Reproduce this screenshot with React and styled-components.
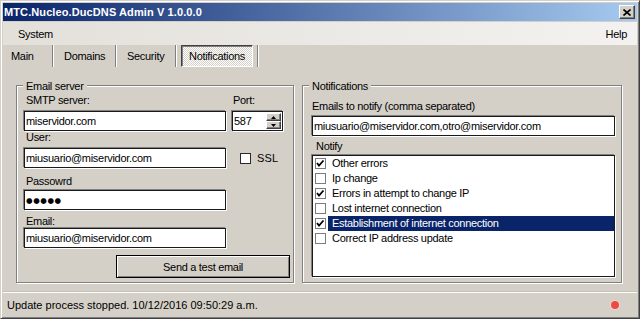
import React from 'react';
import styled, { createGlobalStyle } from 'styled-components';

const GlobalStyle = createGlobalStyle`
  html, body {
    margin: 0;
    padding: 0;
    background: #d4d0c8;
  }
  body {
    font-family: "Liberation Sans", Arial, sans-serif;
    font-size: 11px;
    color: #000;
  }
  * {
    box-sizing: border-box;
  }
`;

const Window = styled.div`
  width: 640px;
  height: 319px;
  display: flex;
  flex-direction: column;
  background: #d4d0c8;
  border: 1px solid;
  border-color: #d4d0c8 #404040 #404040 #d4d0c8;
  box-shadow: inset 1px 1px 0 #fff, inset -1px -1px 0 #808080;
  padding: 2px;
  letter-spacing: -0.3px;
`;

const TitleBar = styled.div`
  flex: none;
  height: 18px;
  display: flex;
  align-items: center;
  justify-content: space-between;
  padding: 0 2px 0 1px;
  background: linear-gradient(to right, #0a246a, #a6caf0);
`;

const Title = styled.span`
  color: #fff;
  font-weight: bold;
  letter-spacing: 0.1px;
`;

const CloseButton = styled.div`
  width: 16px;
  height: 14px;
  display: flex;
  align-items: center;
  justify-content: center;
  background: #d4d0c8;
  border: 1px solid;
  border-color: #fff #404040 #404040 #fff;
  box-shadow: inset -1px -1px 0 #808080;
`;

const MenuBar = styled.div`
  flex: none;
  margin-top: 1px;
  height: 23px;
  display: flex;
  align-items: center;
  justify-content: space-between;
  padding: 0 4px 0 9px;
  background: linear-gradient(to right, #e3e0da, #f3f2f0);
`;

const MenuItem = styled.span`
  padding: 0 6px;
`;

const Toolbar = styled.div`
  flex: none;
  height: 22px;
  display: flex;
  align-items: stretch;
`;

const ToolButton = styled.div`
  width: ${p => p.$w}px;
  display: flex;
  align-items: center;
  justify-content: flex-start;
  padding-left: 8px;
  ${p => p.$pressed && `
    justify-content: center;
    padding-left: 0;
    margin: 0 2px;
    border: 1px solid;
    border-color: #404040 #fff #fff #404040;
    box-shadow: inset 1px 1px 0 #808080;
    background: repeating-conic-gradient(#fff 0 25%, #d4d0c8 0 50%) 0 0 / 2px 2px;
  `}
`;

const ToolSep = styled.div`
  width: 2px;
  margin: 0 2px;
  border-left: 1px solid #808080;
  border-right: 1px solid #fff;
`;

const Content = styled.div`
  flex: 1;
  display: flex;
  align-items: flex-start;
  gap: 8px;
  padding: 18px 0 0 13px;
`;

const Group = styled.div`
  position: relative;
  width: ${p => p.$w}px;
  height: 198px;
  border: 1px solid #808080;
  box-shadow: inset 1px 1px 0 #fff, 1px 1px 0 #fff;
  display: flex;
  flex-direction: column;
  padding-left: ${p => p.$pl}px;
`;

const Legend = styled.div`
  position: absolute;
  top: -6px;
  left: 6px;
  padding: 0 3px;
  line-height: 13px;
  background: #d4d0c8;
`;

const Row = styled.div`
  display: flex;
  align-items: center;
  margin-top: ${p => p.$mt || 0}px;
`;

const Label = styled.div`
  height: 13px;
  line-height: 13px;
  white-space: nowrap;
  margin-top: ${p => p.$mt || 0}px;
  padding-left: ${p => p.$pl ?? 2}px;
  width: ${p => (p.$w ? `${p.$w}px` : 'auto')};
`;

const TextBox = styled.div`
  width: ${p => p.$w}px;
  height: 20px;
  margin-top: ${p => p.$mt || 0}px;
  display: flex;
  align-items: center;
  padding-left: 1px;
  background: #fff;
  border: 1px solid #1a1a1a;
  box-shadow: -1px -1px 0 #808080, 1px 1px 0 #fff;
  white-space: nowrap;
  overflow: hidden;
`;

const Dots = styled.span`
  font-family: "DejaVu Sans", sans-serif;
  font-size: 7.5px;
  letter-spacing: 0.6px;
`;

const Spinner = styled(TextBox)`
  justify-content: space-between;
  margin-left: 6px;
  padding-right: 1px;
`;

const SpinButtons = styled.div`
  display: flex;
  flex-direction: column;
`;

const SpinButton = styled.div`
  width: 15px;
  height: 8px;
  display: flex;
  align-items: center;
  justify-content: center;
  background: #d4d0c8;
  border: 1px solid;
  border-color: #fff #404040 #404040 #fff;
  box-shadow: inset -1px -1px 0 #808080;
`;

const CheckBox = styled.div`
  flex: none;
  width: 11px;
  height: 11px;
  margin-left: ${p => p.$ml || 0}px;
  background: #fff;
  border: 1px solid ${p => (p.$dark ? '#2a2a2a' : '#7c7c7c')};
  display: flex;
  align-items: center;
  justify-content: center;
`;

const CheckLabel = styled.span`
  margin-left: 6px;
  letter-spacing: 0.2px;
`;

const ButtonRow = styled.div`
  display: flex;
  justify-content: flex-end;
  margin-top: 7px;
  padding-right: 3px;
`;

const PushButton = styled.div`
  width: 174px;
  height: 23px;
  display: flex;
  align-items: center;
  justify-content: center;
  background: #d4d0c8;
  border: 1px solid #000;
  box-shadow: inset 1px 1px 0 #fff, inset -1px -1px 0 #808080;
`;

const ListBox = styled.div`
  width: 303px;
  height: 122px;
  margin-top: 2px;
  background: #fff;
  border: 1px solid #1a1a1a;
  box-shadow: -1px -1px 0 #808080, 1px 1px 0 #fff;
  display: flex;
  flex-direction: column;
`;

const ListItem = styled.div`
  height: 15px;
  display: flex;
  align-items: center;
  padding-left: 2px;
`;

const ItemText = styled.div`
  flex: 1;
  height: 15px;
  line-height: 15px;
  margin-left: 2px;
  padding-left: 4px;
  background: ${p => (p.$selected ? '#0a246a' : 'transparent')};
  color: ${p => (p.$selected ? '#fff' : '#000')};
`;

const StatusBar = styled.div`
  flex: none;
  height: 24px;
  display: flex;
  align-items: center;
  justify-content: space-between;
  padding: 0 18px 0 4px;
  border-top: 1px solid #fff;
  box-shadow: 0 -1px 0 #c4c0b8;
  letter-spacing: 0;
`;

const StatusLight = styled.div`
  width: 8px;
  height: 8px;
  border-radius: 50%;
  background: #ec4a44;
  box-shadow: 0 0 0 1px #f4d8d4;
`;

const Check = () => (
  <svg width="9" height="9" viewBox="0 0 9 9">
    <path d="M1 4 L3 6.5 L7.5 1.5" fill="none" stroke="#000" strokeWidth="1.8" />
  </svg>
);

const notifyItems = [
  { text: 'Other errors', checked: true },
  { text: 'Ip change', checked: false },
  { text: 'Errors in attempt to change IP', checked: true },
  { text: 'Lost internet connection', checked: false },
  { text: 'Establishment of internet connection', checked: true, selected: true },
  { text: 'Correct IP address update', checked: false },
];

const App = () => {
  return (
    <Window>
      <GlobalStyle />
      <TitleBar>
        <Title>MTC.Nucleo.DucDNS Admin V 1.0.0.0</Title>
        <CloseButton>
          <svg width="8" height="7" viewBox="0 0 8 7">
            <path d="M0.5 0.5 L7.5 6.5 M7.5 0.5 L0.5 6.5" stroke="#000" strokeWidth="1.6" />
          </svg>
        </CloseButton>
      </TitleBar>

      <MenuBar>
        <MenuItem>System</MenuItem>
        <MenuItem>Help</MenuItem>
      </MenuBar>

      <Toolbar>
        <ToolButton $w={47}>Main</ToolButton>
        <ToolSep />
        <ToolButton $w={57}>Domains</ToolButton>
        <ToolSep />
        <ToolButton $w={54}>Security</ToolButton>
        <ToolSep />
        <ToolButton $w={72} $pressed>Notifications</ToolButton>
        <ToolSep />
      </Toolbar>

      <Content>
        <Group $w={278} $pl={7}>
          <Legend>Email server</Legend>
          <Row $mt={8}>
            <Label $w={208}>SMTP server:</Label>
            <Label $pl={1}>Port:</Label>
          </Row>
          <Row $mt={4}>
            <TextBox $w={202}>miservidor.com</TextBox>
            <Spinner $w={51}>
              <span>587</span>
              <SpinButtons>
                <SpinButton>
                  <svg width="5" height="3" viewBox="0 0 5 3"><path d="M2.5 0 L5 3 L0 3 Z" fill="#000" /></svg>
                </SpinButton>
                <SpinButton>
                  <svg width="5" height="3" viewBox="0 0 5 3"><path d="M0 0 L5 0 L2.5 3 Z" fill="#000" /></svg>
                </SpinButton>
              </SpinButtons>
            </Spinner>
          </Row>
          <Label>User:</Label>
          <Row $mt={4}>
            <TextBox $w={202}>miusuario@miservidor.com</TextBox>
            <CheckBox $ml={14} $dark />
            <CheckLabel>SSL</CheckLabel>
          </Row>
          <Label $mt={7}>Passowrd</Label>
          <TextBox $w={202} $mt={2}>
            <Dots>●●●●●</Dots>
          </TextBox>
          <Label $mt={5}>Email:</Label>
          <TextBox $w={202}>miusuario@miservidor.com</TextBox>
          <ButtonRow>
            <PushButton>Send a test email</PushButton>
          </ButtonRow>
        </Group>

        <Group $w={320} $pl={9}>
          <Legend>Notifications</Legend>
          <Label $mt={14} $pl={0}>Emails to notify (comma separated)</Label>
          <TextBox $w={303} $mt={3}>miusuario@miservidor.com,otro@miservidor.com</TextBox>
          <Label $mt={4} $pl={4}>Notify</Label>
          <ListBox>
            {notifyItems.map(item => (
              <ListItem key={item.text}>
                <CheckBox>{item.checked && <Check />}</CheckBox>
                <ItemText $selected={item.selected}>{item.text}</ItemText>
              </ListItem>
            ))}
          </ListBox>
        </Group>
      </Content>

      <StatusBar>
        <span>Update process stopped. 10/12/2016 09:50:29 a.m.</span>
        <StatusLight />
      </StatusBar>
    </Window>
  );
};

export default App;
